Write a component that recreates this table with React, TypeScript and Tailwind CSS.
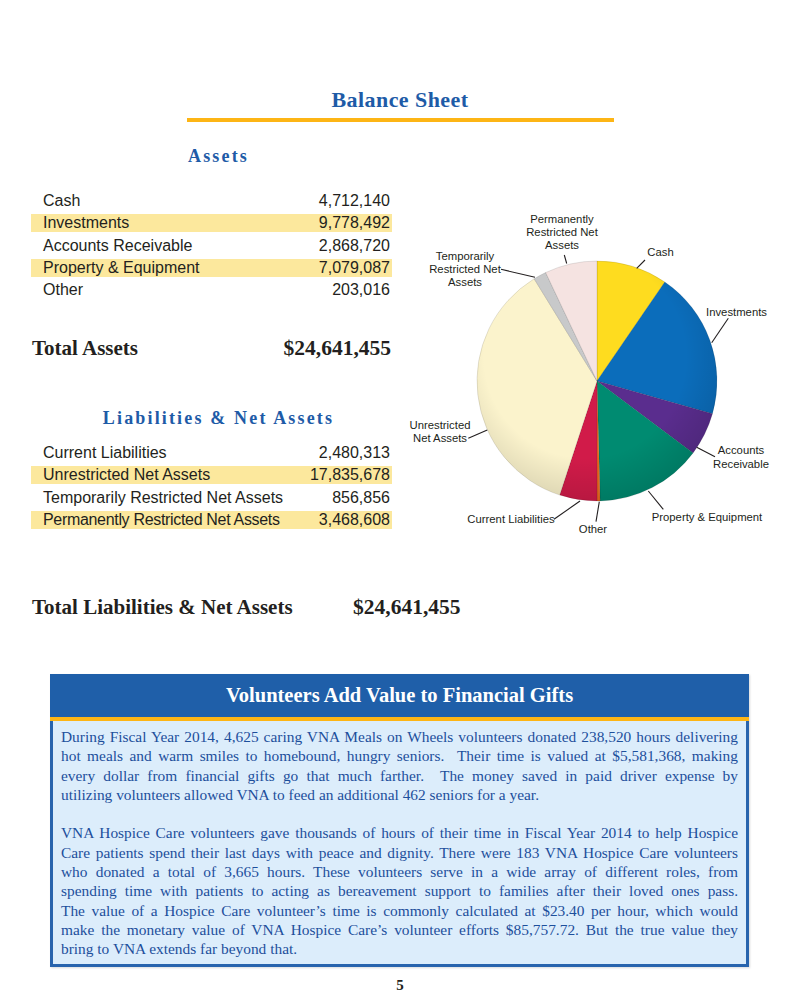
const serif = "font-['Liberation_Serif','Times_New_Roman',serif]";
const sans = "font-['Liberation_Sans',Arial,sans-serif]";

type Item = { label: string; value: string; band?: boolean; tight?: boolean };

const assets: Item[] = [
  { label: "Cash", value: "4,712,140" },
  { label: "Investments", value: "9,778,492", band: true },
  { label: "Accounts Receivable", value: "2,868,720" },
  { label: "Property & Equipment", value: "7,079,087", band: true },
  { label: "Other", value: "203,016" },
];

const liabilities: Item[] = [
  { label: "Current Liabilities", value: "2,480,313" },
  { label: "Unrestricted Net Assets", value: "17,835,678", band: true },
  { label: "Temporarily Restricted Net Assets", value: "856,856" },
  { label: "Permanently Restricted Net Assets", value: "3,468,608", band: true, tight: true },
];

const slices = [
  { v: 4712140, c: "#fedc1f" },
  { v: 9778492, c: "#0b6dbb" },
  { v: 2868720, c: "#5a2d8e" },
  { v: 7079087, c: "#008b71" },
  { v: 203016, c: "#f26a21" },
  { v: 2480313, c: "#d11b49" },
  { v: 17835678, c: "#fbf3cc" },
  { v: 856856, c: "#c8c9ca" },
  { v: 3468608, c: "#f5e3e1" },
];

// label lines: [centerX, centerY, text]
const labels: [number, number, string][] = [
  [562, 219, "Permanently"],
  [562, 232, "Restricted Net"],
  [562, 244.5, "Assets"],
  [465, 256, "Temporarily"],
  [465, 269, "Restricted Net"],
  [465, 282, "Assets"],
  [660.5, 252, "Cash"],
  [736.5, 312, "Investments"],
  [741, 450, "Accounts"],
  [741, 463.5, "Receivable"],
  [707, 517, "Property & Equipment"],
  [593, 528.5, "Other"],
  [511, 518.5, "Current Liabilities"],
  [440, 425, "Unrestricted"],
  [440, 438, "Net Assets"],
];

const leaders: [number, number, number, number][] = [
  [564.3, 255, 566.7, 263.5],
  [501, 269.3, 535, 277.3],
  [645, 260, 636.7, 268.3],
  [728.3, 318.3, 711.7, 342.7],
  [696.7, 447.3, 715, 456.7],
  [648.3, 491, 663.3, 509.3],
  [599.3, 501.7, 596, 521.7],
  [554, 519.3, 580, 501],
  [468.3, 438.3, 487.3, 430],
];

function PieChart() {
  const cx = 597;
  const cy = 381;
  const r = 120;
  const total = slices.reduce((s, x) => s + x.v, 0);
  let acc = 0;
  const pt = (a: number) => [cx + r * Math.sin(a), cy - r * Math.cos(a)];
  return (
    <svg width={400} height={340} viewBox="400 200 400 340" className="mt-[56px] ml-[8px] shrink-0">
      <defs>
        <radialGradient id="shade" cx="0.45" cy="0.4" r="0.6">
          <stop offset="0.7" stopColor="#000" stopOpacity="0" />
          <stop offset="1" stopColor="#000" stopOpacity="0.12" />
        </radialGradient>
      </defs>
      {slices.map((s, i) => {
        const a0 = (acc / total) * Math.PI * 2;
        acc += s.v;
        const a1 = (acc / total) * Math.PI * 2;
        const [x0, y0] = pt(a0);
        const [x1, y1] = pt(a1);
        const large = a1 - a0 > Math.PI ? 1 : 0;
        return (
          <path
            key={i}
            d={`M${cx} ${cy} L${x0} ${y0} A${r} ${r} 0 ${large} 1 ${x1} ${y1} Z`}
            fill={s.c}
            stroke="rgba(0,0,0,0.18)"
            strokeWidth={0.6}
          />
        );
      })}
      <circle cx={cx} cy={cy} r={r} fill="url(#shade)" />
      {leaders.map(([x1, y1, x2, y2], i) => (
        <line key={i} x1={x1} y1={y1} x2={x2} y2={y2} stroke="#231f20" strokeWidth={1.1} />
      ))}
      {labels.map(([x, y, t], i) => (
        <text
          key={i}
          x={x}
          y={y + 4}
          textAnchor="middle"
          fontFamily="'Liberation Sans', Arial, sans-serif"
          fontSize={11.3}
          fill="#231f20"
        >
          {t}
        </text>
      ))}
    </svg>
  );
}

function Row({ item }: { item: Item }) {
  return (
    <div
      className={`flex h-[18px] items-center justify-between pl-[12px] pr-[2px] text-[16px] leading-[18px] ${
        item.band ? "bg-[#fce89d]" : ""
      }`}
    >
      <span className={item.tight ? "tracking-[-0.02em]" : ""}>{item.label}</span>
      <span>{item.value}</span>
    </div>
  );
}

const para1 = [
  "During Fiscal Year 2014, 4,625 caring VNA Meals on Wheels volunteers donated 238,520 hours delivering",
  "hot meals and warm smiles to homebound, hungry seniors.\u00a0 Their time is valued at $5,581,368, making",
  "every dollar from financial gifts go that much farther.\u00a0 The money saved in paid driver expense by",
];
const para1End = "utilizing volunteers allowed VNA to feed an additional 462 seniors for a year.";

const para2 = [
  "VNA Hospice Care volunteers gave thousands of hours of their time in Fiscal Year 2014 to help Hospice",
  "Care patients spend their last days with peace and dignity. There were 183 VNA Hospice Care volunteers",
  "who donated a total of 3,665 hours. These volunteers serve in a wide array of different roles, from",
  "spending time with patients to acting as bereavement support to families after their loved ones pass.",
  "The value of a Hospice Care volunteer\u2019s time is commonly calculated at $23.40 per hour, which would",
  "make the monetary value of VNA Hospice Care\u2019s volunteer efforts $85,757.72. But the true value they",
];
const para2End = "bring to VNA extends far beyond that.";

export default function App() {
  return (
    <div className={`h-[1000px] w-[800px] bg-white pt-[86px] text-[#231f20] ${sans}`}>
      <h1 className={`${serif} text-center text-[22px] font-bold leading-[28px] tracking-[0.02em] text-[#1e5ba7]`}>
        Balance Sheet
      </h1>
      <div className="mx-auto mt-[4px] h-[4px] w-[427px] bg-[#fdb515]" />

      <div className="mt-[22px] flex items-start">
        <div className="ml-[31px] w-[361px] shrink-0">
          <h2
            className={`${serif} pl-[14px] text-center text-[18px] font-bold leading-[24px] tracking-[0.12em] text-[#1e5ba7]`}
          >
            Assets
          </h2>
          <div className="mt-[24px] flex flex-col gap-[4.3px]">
            {assets.map((a) => (
              <Row key={a.label} item={a} />
            ))}
          </div>
          <div
            className={`${serif} mt-[36px] flex h-[26px] items-center justify-between pl-[1px] pr-[1px] text-[21.5px] font-bold leading-[26px]`}
          >
            <span className="text-[21px]">Total Assets</span>
            <span>$24,641,455</span>
          </div>

          <h2
            className={`${serif} mt-[45px] pl-[14px] text-center text-[18px] font-bold leading-[24px] tracking-[0.12em] text-[#1e5ba7]`}
          >
            Liabilities &amp; Net Assets
          </h2>
          <div className="mt-[14px] flex flex-col gap-[4.3px]">
            {liabilities.map((a) => (
              <Row key={a.label} item={a} />
            ))}
          </div>
        </div>
        <PieChart />
      </div>

      <div className={`${serif} mt-[54px] ml-[32px] flex h-[26px] items-center font-bold leading-[26px]`}>
        <span className="w-[321px] text-[21px]">Total Liabilities &amp; Net Assets</span>
        <span className="text-[21.5px]">$24,641,455</span>
      </div>

      <div className="mt-[54px] ml-[50px] w-[699px] shadow-[1px_1px_2px_rgba(0,0,0,0.15)]">
        <div className="flex h-[43px] items-center justify-center bg-[#1f5fa9]">
          <span className={`${serif} text-[20.5px] font-bold text-white`}>Volunteers Add Value to Financial Gifts</span>
        </div>
        <div className="h-[4px] bg-[#fdb515]" />
        <div
          className={`${serif} border-x-[3px] border-b-[3px] border-[#2864ad] bg-[#dcedfb] pt-[6px] pr-[8px] pb-[5px] pl-[8px] text-[15.4px] leading-[19.3px] text-[#1d4f9c]`}
        >
          {para1.map((l) => (
            <div key={l} className="text-justify [text-align-last:justify]">
              {l}
            </div>
          ))}
          <div>{para1End}</div>
          <div className="h-[19.3px]" />
          {para2.map((l) => (
            <div key={l} className="text-justify [text-align-last:justify]">
              {l}
            </div>
          ))}
          <div>{para2End}</div>
        </div>
      </div>

      <div className={`${serif} mt-[10px] text-center text-[15px] font-bold leading-[16px]`}>5</div>
    </div>
  );
}
